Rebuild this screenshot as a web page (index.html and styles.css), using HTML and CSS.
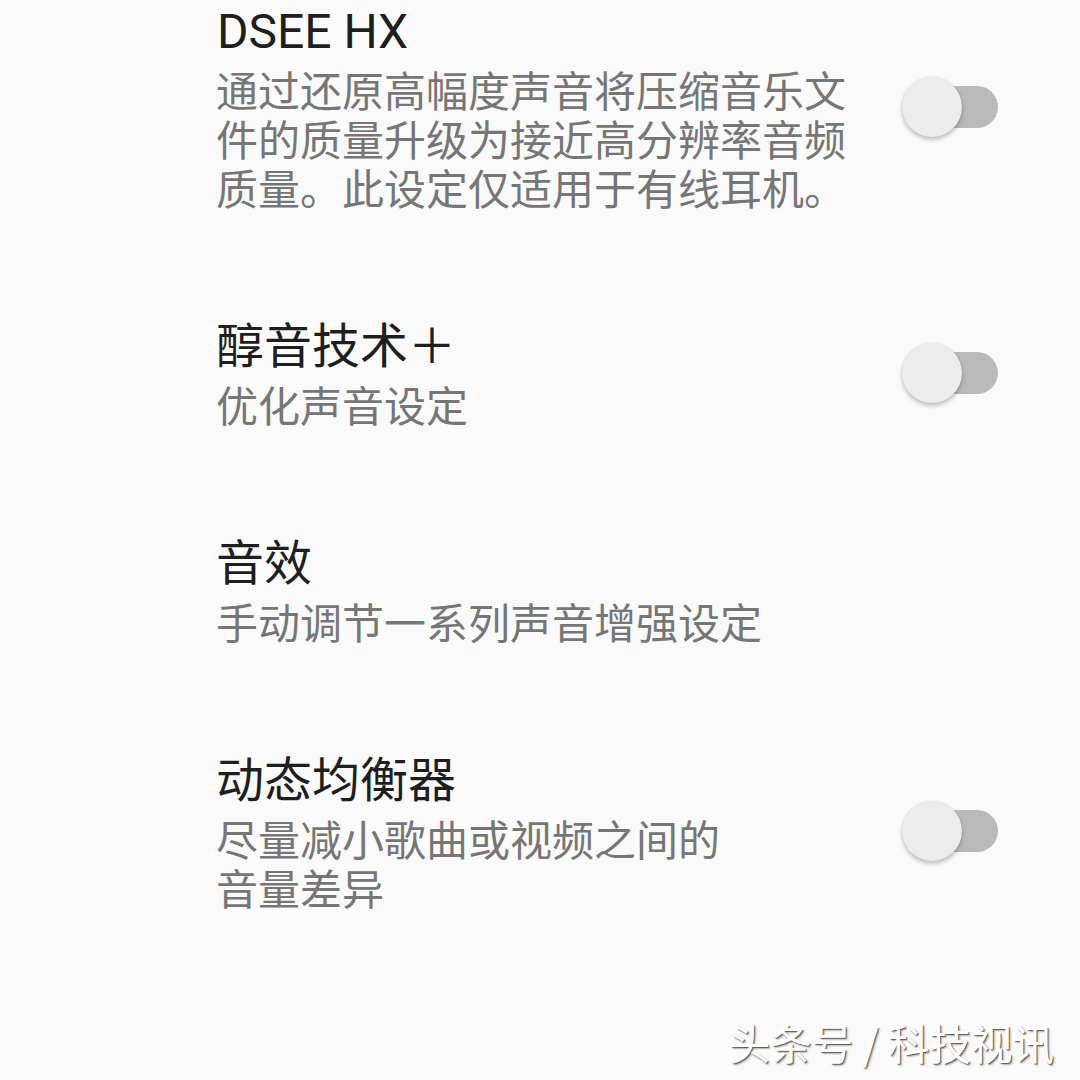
FILE: index.html
```html
<!DOCTYPE html>
<html lang="zh-CN">
<head>
    <meta charset="UTF-8">
    <meta name="viewport" content="width=device-width, initial-scale=1.0">
    <title>音质设定</title>
    <link rel="stylesheet" href="styles.css">
</head>
<body>

    <!-- Sound settings list -->
    <div class="settings-list">

        <div class="setting-item">
            <div class="setting-text">
                <div class="setting-title latin">DSEE HX</div>
                <div class="setting-summary">通过还原高幅度声音将压缩音乐文<br>件的质量升级为接近高分辨率音频<br>质量。此设定仅适用于有线耳机。</div>
            </div>
            <div class="switch">
                <span class="switch-track"></span>
                <span class="switch-thumb"></span>
            </div>
        </div>

        <div class="setting-item">
            <div class="setting-text">
                <div class="setting-title">醇音技术＋</div>
                <div class="setting-summary">优化声音设定</div>
            </div>
            <div class="switch">
                <span class="switch-track"></span>
                <span class="switch-thumb"></span>
            </div>
        </div>

        <div class="setting-item">
            <div class="setting-text">
                <div class="setting-title">音效</div>
                <div class="setting-summary">手动调节一系列声音增强设定</div>
            </div>
        </div>

        <div class="setting-item">
            <div class="setting-text">
                <div class="setting-title">动态均衡器</div>
                <div class="setting-summary">尽量减小歌曲或视频之间的<br>音量差异</div>
            </div>
            <div class="switch">
                <span class="switch-track"></span>
                <span class="switch-thumb"></span>
            </div>
        </div>

    </div>

    <!-- Watermark -->
    <div class="watermark">头条号 / 科技视讯</div>

</body>
</html>
```

FILE: styles.css
```css
/* General Page Styles */
body {
    margin: 0;
    width: 1080px;
    height: 1080px;
    overflow: hidden;
    position: relative;
    background: #fafafa;
    font-family: Roboto, "Noto Sans CJK SC", sans-serif;
}

/* Settings List (scrolled slightly) */
.settings-list {
    margin-top: -50px;
}

.setting-item {
    display: flex;
    align-items: center;
    padding: 52px 82px 50px 216px;
}

.setting-text {
    flex: 1;
}

.setting-title {
    font-size: 48px;
    line-height: 60px;
    color: #1e1e1e;
    margin-bottom: 6px;
}

.setting-title.latin {
    padding-left: 1px;
}

.setting-summary {
    font-size: 42px;
    line-height: 49px;
    color: #767676;
}

/* Switch (off state) */
.switch {
    position: relative;
    width: 96px;
    height: 62px;
    margin-top: -4px;
    flex-shrink: 0;
}

.switch-track {
    position: absolute;
    left: 3px;
    right: 0;
    top: 10px;
    height: 42px;
    border-radius: 21px;
    background: #b9b9b9;
}

.switch-thumb {
    position: absolute;
    left: 0;
    top: 1px;
    width: 60px;
    height: 60px;
    border-radius: 50%;
    background: #ececec;
    box-shadow: 0 3px 4px rgba(0, 0, 0, 0.22), 0 0 2px rgba(0, 0, 0, 0.12);
}

/* Watermark */
.watermark {
    position: absolute;
    right: 26px;
    bottom: 14px;
    font-family: "Noto Sans CJK SC", sans-serif;
    font-size: 41.5px;
    line-height: 48px;
    color: #ffffff;
    text-shadow: 1px 1px 1px rgba(0, 0, 0, 0.55), 2px 2px 2px rgba(0, 0, 0, 0.25);
}
```
